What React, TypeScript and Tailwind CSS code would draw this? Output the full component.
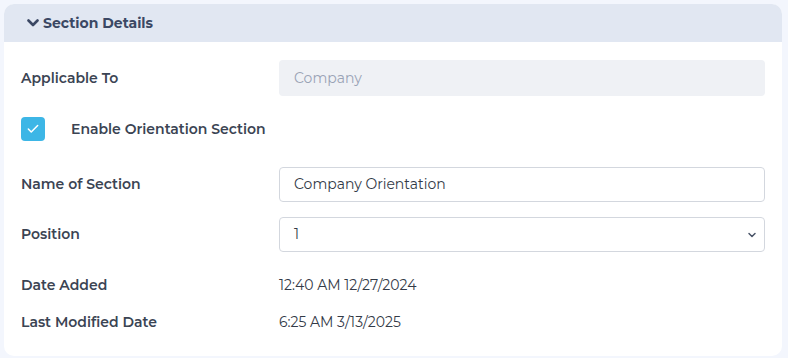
import { Check, ChevronDown } from "lucide-react";

const FONT = { fontFamily: "Montserrat, Inter, 'Noto Sans', sans-serif" };

export default function App() {
  return (
    <main className="min-h-screen bg-[#f3f6fd] p-[4px] pr-[6px]" style={FONT}>
      <section className="overflow-hidden rounded-[10px] bg-white">
        <header className="flex h-[38px] items-center gap-[4px] bg-[#e1e7f2] px-[23px]">
          <svg width="12" height="8" viewBox="0 0 12 8" className="text-[#3b4864]">
            <path d="M1.5 1.5 6 6l4.5-4.5" fill="none" stroke="currentColor" strokeWidth="2.6" strokeLinecap="round" strokeLinejoin="round" />
          </svg>
          <h2 className="text-[14px] font-bold text-[#3b4864]">Section Details</h2>
        </header>

        <div className="px-[17px] pb-[23px] pt-[18px] text-[14px] text-[#3a4457]">
          <Row label="Applicable To">
            <div className="flex h-[36px] items-center rounded-[4px] bg-[#eff1f5] px-[15px] text-[#9aa3b5]">
              Company
            </div>
          </Row>

          <div className="mt-[21px] flex items-center gap-[26px]">
            <span className="flex h-[24px] w-[24px] items-center justify-center rounded-[4px] bg-[#3db6e6]">
              <Check className="h-[14px] w-[14px] text-white" strokeWidth={2.6} />
            </span>
            <span className="font-semibold text-[#3b4453]">Enable Orientation Section</span>
          </div>

          <div className="mt-[26px]">
            <Row label="Name of Section">
              <div className="flex h-[35px] items-center rounded-[4px] border border-[#d3d7de] px-[14px] text-[#333a47]">
                Company Orientation
              </div>
            </Row>
          </div>

          <div className="mt-[15px]">
            <Row label="Position">
              <div className="flex h-[35px] items-center justify-between rounded-[4px] border border-[#d3d7de] pl-[14px] pr-[6px] text-[#333a47]">
                <span>1</span>
                <ChevronDown className="h-[12px] w-[12px] text-[#4a5568]" strokeWidth={3} />
              </div>
            </Row>
          </div>

          <div className="mt-[23px]">
            <Row label="Date Added">
              <span className="text-[#333a47]">12:40 AM 12/27/2024</span>
            </Row>
          </div>
          <div className="mt-[16px]">
            <Row label="Last Modified Date">
              <span className="text-[#333a47]">6:25 AM 3/13/2025</span>
            </Row>
          </div>
        </div>
      </section>
    </main>
  );
}

function Row({ label, children }: { label: string; children: React.ReactNode }) {
  return (
    <div className="grid grid-cols-[258px_1fr] items-center">
      <span className="font-semibold text-[#3b4453]">{label}</span>
      <div>{children}</div>
    </div>
  );
}
